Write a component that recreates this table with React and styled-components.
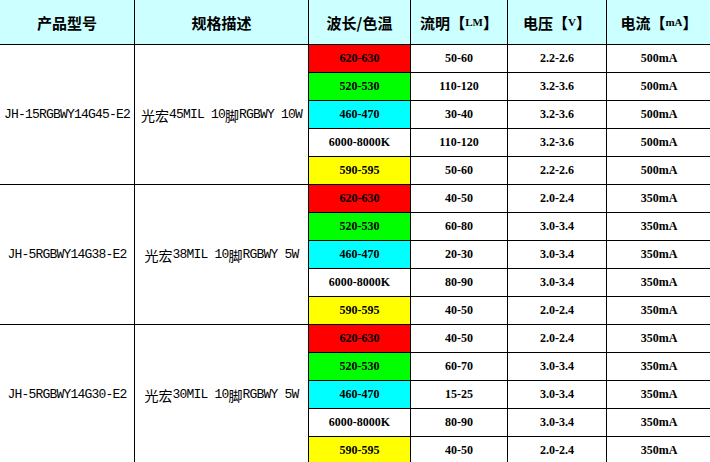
import React from "react";
import styled, { createGlobalStyle } from "styled-components";

const Global = createGlobalStyle`
  html, body { margin: 0; padding: 0; background: #fff; overflow: hidden; }
  body { width: 710px; height: 462px; }
`;

const Sheet = styled.div`
  display: grid;
  grid-template-columns: 134px 173px 101px 96px 98px 104px;
  grid-template-rows: 44px repeat(15, 27px);
  gap: 1px;
  background: #000;
  width: 710px;
  height: 462px;
  overflow: hidden;
`;

const Head = styled.div`
  background: #ccffff;
  display: flex;
  align-items: center;
  justify-content: center;
  font-family: "Noto Sans CJK SC", "Liberation Serif", serif;
  font-weight: 700;
  font-size: 15px;
  color: #000;
  white-space: nowrap;
`;

const Unit = styled.span`
  font-family: "Liberation Serif", serif;
  font-size: 11px;
  font-weight: 700;
`;

const Bracket = styled.span`
  font-family: "Noto Sans CJK SC", sans-serif;
  font-weight: 900;
`;

const Span = styled.div`
  grid-row: span 5;
  background: #fff;
  display: flex;
  align-items: center;
  justify-content: center;
  font-family: "Liberation Mono", monospace;
  font-size: 13px;
  letter-spacing: -0.8px;
  color: #000;
  white-space: pre;
`;

const Han = styled.span`
  font-family: "Noto Sans CJK SC", sans-serif;
  font-size: 14px;
  letter-spacing: 0;
  line-height: 1;
`;

const Cell = styled.div`
  background: ${(p) => p.$bg || "#fff"};
  display: flex;
  align-items: center;
  justify-content: center;
  font-family: "Liberation Serif", serif;
  font-weight: 700;
  font-size: 12px;
  color: #000;
  white-space: nowrap;
`;

const colors = {
  "620-630": "#ff0000",
  "520-530": "#00ff00",
  "460-470": "#00ffff",
  "6000-8000K": "#ffffff",
  "590-595": "#ffff00",
};

const groups = [
  {
    model: "JH-15RGBWY14G45-E2",
    mil: "45",
    watt: "10W",
    rows: [
      ["620-630", "50-60", "2.2-2.6", "500mA"],
      ["520-530", "110-120", "3.2-3.6", "500mA"],
      ["460-470", "30-40", "3.2-3.6", "500mA"],
      ["6000-8000K", "110-120", "3.2-3.6", "500mA"],
      ["590-595", "50-60", "2.2-2.6", "500mA"],
    ],
  },
  {
    model: "JH-5RGBWY14G38-E2",
    mil: "38",
    watt: "5W",
    rows: [
      ["620-630", "40-50", "2.0-2.4", "350mA"],
      ["520-530", "60-80", "3.0-3.4", "350mA"],
      ["460-470", "20-30", "3.0-3.4", "350mA"],
      ["6000-8000K", "80-90", "3.0-3.4", "350mA"],
      ["590-595", "40-50", "2.0-2.4", "350mA"],
    ],
  },
  {
    model: "JH-5RGBWY14G30-E2",
    mil: "30",
    watt: "5W",
    rows: [
      ["620-630", "40-50", "2.0-2.4", "350mA"],
      ["520-530", "60-70", "3.0-3.4", "350mA"],
      ["460-470", "15-25", "3.0-3.4", "350mA"],
      ["6000-8000K", "80-90", "3.0-3.4", "350mA"],
      ["590-595", "40-50", "2.0-2.4", "350mA"],
    ],
  },
];

export default function App() {
  return (
    <>
      <Global />
      <Sheet>
        <Head>产品型号</Head>
        <Head>规格描述</Head>
        <Head>波长/色温</Head>
        <Head>
          流明<Bracket>【</Bracket>
          <Unit>LM</Unit>
          <Bracket>】</Bracket>
        </Head>
        <Head>
          电压<Bracket>【</Bracket>
          <Unit>V</Unit>
          <Bracket>】</Bracket>
        </Head>
        <Head>
          电流<Bracket>【</Bracket>
          <Unit>mA</Unit>
          <Bracket>】</Bracket>
        </Head>
        {groups.map((g, gi) => (
          <React.Fragment key={gi}>
            {g.rows.map((r, ri) => (
              <React.Fragment key={ri}>
                {ri === 0 && (
                  <>
                    <Span style={{ gridColumn: 1 }}>{g.model}</Span>
                    <Span style={{ gridColumn: 2 }}>
                      <Han>光宏</Han>
                      {`${g.mil}MIL 10`}
                      <Han>脚</Han>
                      {`RGBWY ${g.watt}`}
                    </Span>
                  </>
                )}
                <Cell $bg={colors[r[0]]}>{r[0]}</Cell>
                <Cell>{r[1]}</Cell>
                <Cell>{r[2]}</Cell>
                <Cell>{r[3]}</Cell>
              </React.Fragment>
            ))}
          </React.Fragment>
        ))}
      </Sheet>
    </>
  );
}
